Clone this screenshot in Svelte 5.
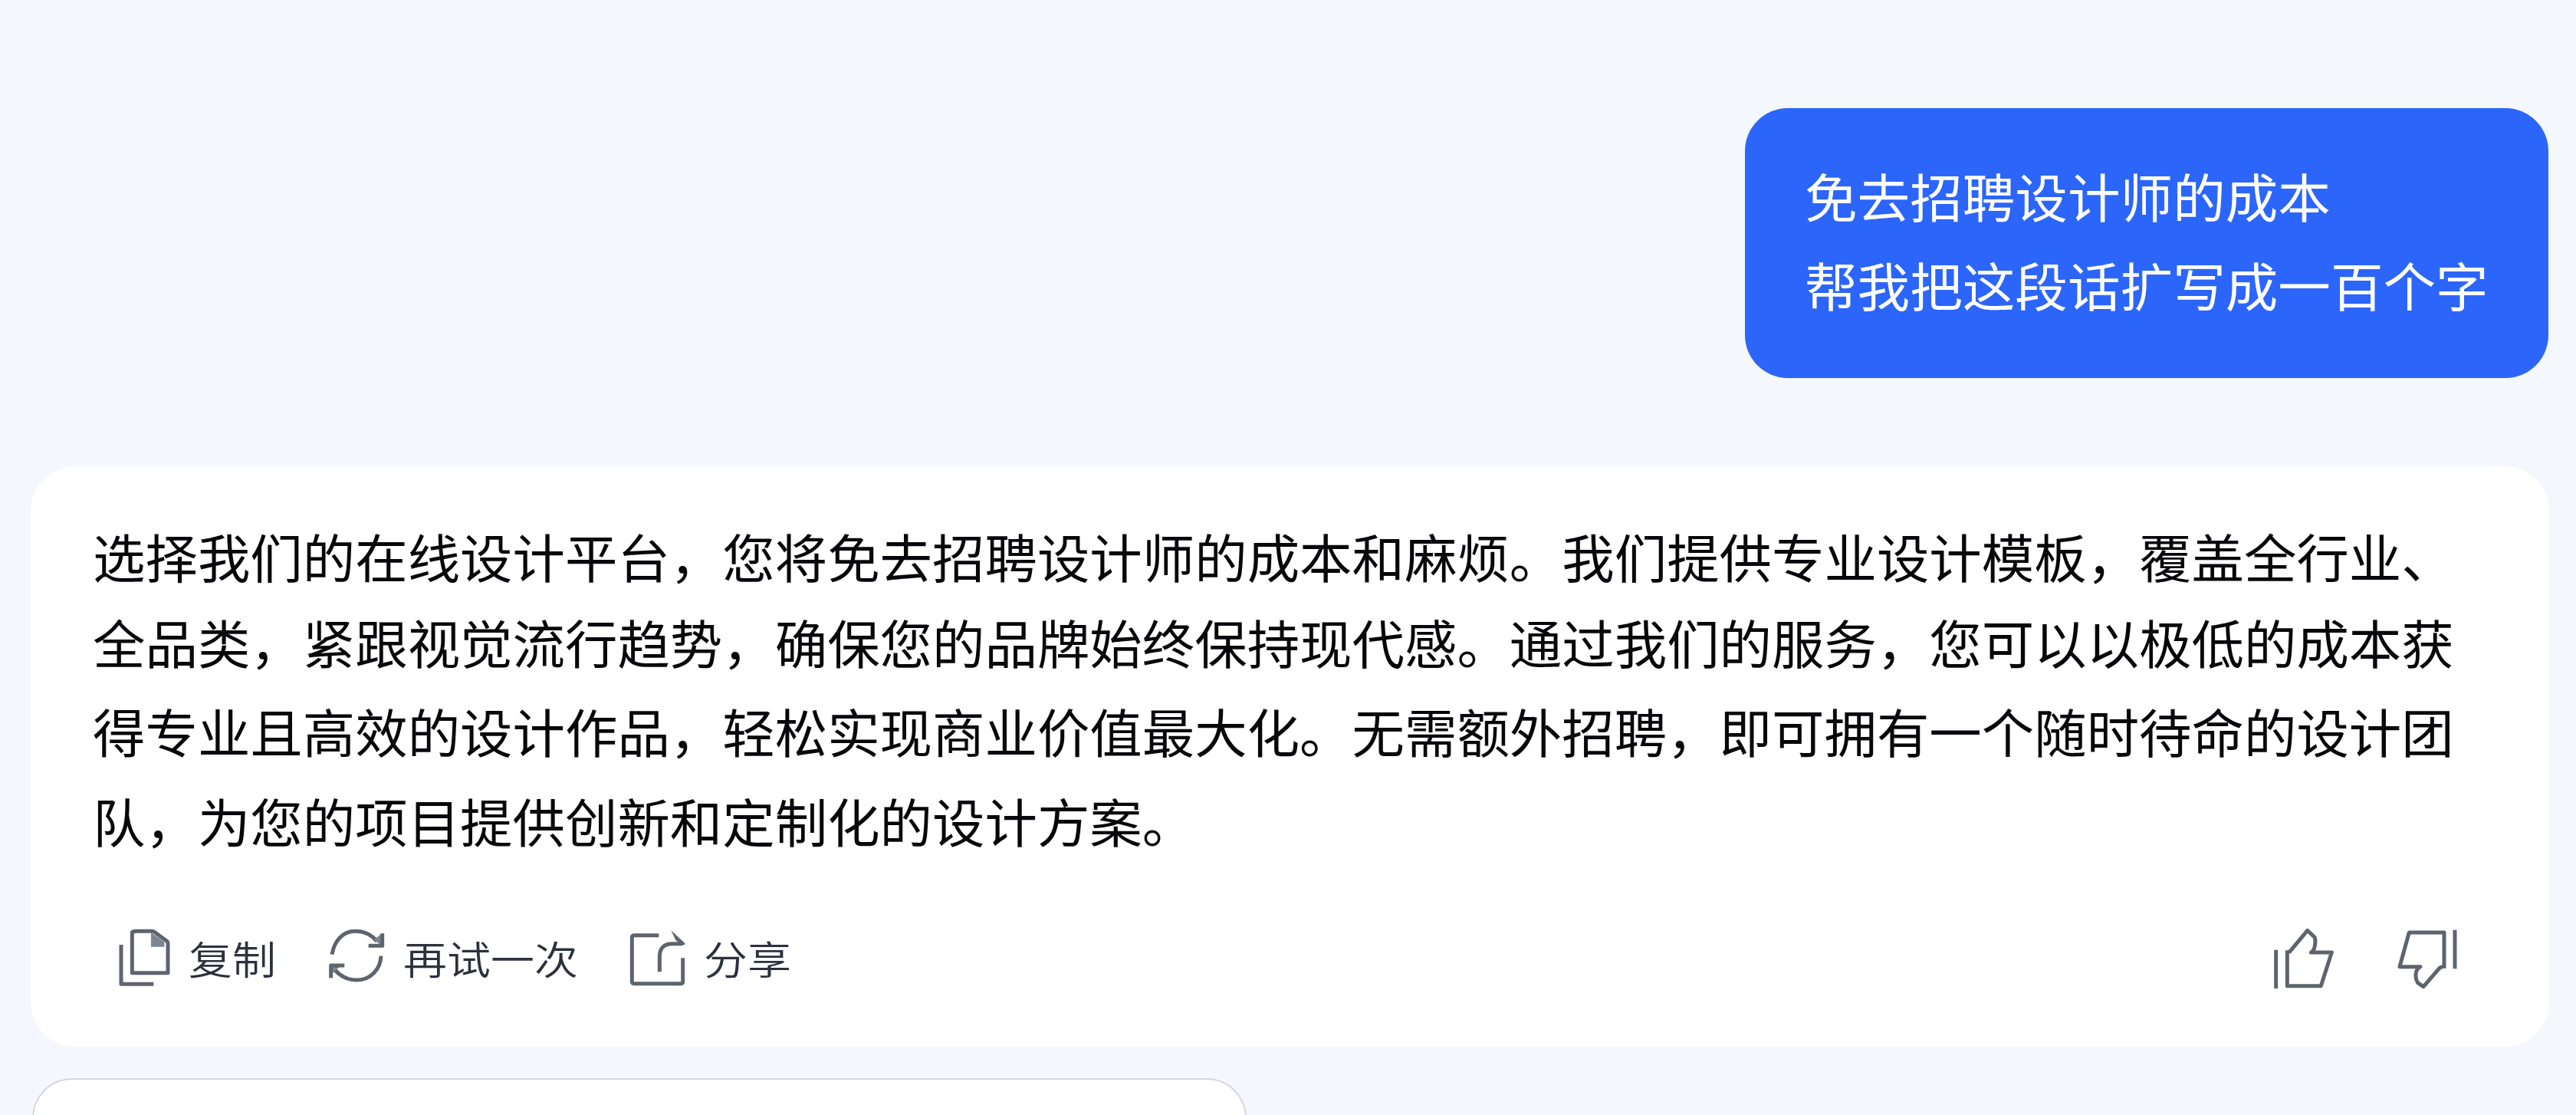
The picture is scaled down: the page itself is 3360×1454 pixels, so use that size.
<script>
  const prompt = ['免去招聘设计师的成本', '帮我把这段话扩写成一百个字'];
  const reply = [
    '选择我们的在线设计平台，您将免去招聘设计师的成本和麻烦。我们提供专业设计模板，覆盖全行业、',
    '全品类，紧跟视觉流行趋势，确保您的品牌始终保持现代感。通过我们的服务，您可以以极低的成本获',
    '得专业且高效的设计作品，轻松实现商业价值最大化。无需额外招聘，即可拥有一个随时待命的设计团',
    '队，为您的项目提供创新和定制化的设计方案。'
  ];
</script>

<main class="chat">
  <section class="bubble">
    {#each prompt as line}
      <p>{line}</p>
    {/each}
  </section>

  <section class="card">
    <div class="reply">
      {#each reply as line}
        <p>{line}</p>
      {/each}
    </div>
    <footer class="actions">
      <button class="copy" aria-label="复制">
        <svg width="68" height="78" viewBox="0 0 204 234">
          <path d="M9 66V220H136" />
          <path d="M52 18Q52 13 72 13H128Q136 13 142 18L186 50Q192 54 192 62V176H52Z" />
          <path class="fold" d="M126 18L178 54V74H126Z" />
        </svg>
        <span>复制</span>
      </button>
      <button class="retry" aria-label="再试一次">
        <svg width="74" height="78" viewBox="0 0 222 234">
          <path d="M15 104C24 52 56 13 106 13C148 13 172 30 190 52" />
          <path d="M207 110C205 160 168 204 112 204C76 204 48 190 24 162" />
          <path class="fold" d="M178 48L212 20V70Z" />
          <path d="M212 22V70H158" />
          <path class="fold" d="M10 148H50L10 184Z" />
          <path d="M11 196V147H64" />
        </svg>
        <span>再试一次</span>
      </button>
      <button class="share" aria-label="分享">
        <svg width="76" height="78" viewBox="0 0 228 234">
          <path d="M118 29H22Q13 29 13 38V210Q13 218 21 218H205Q212 218 212 210V118" />
          <path d="M121 172V112C121 76 142 62 170 62H212" />
          <path class="fold dark" d="M166 10L220 60V66H206L184 48Z" />
        </svg>
        <span>分享</span>
      </button>
      <span class="spacer"></span>
      <button class="up" aria-label="赞">
        <svg width="82" height="80" viewBox="0 0 246 240">
          <path d="M17 86V237M61 88V227H193L235 96H154C170 90 174 50 168 36L140 10L72 92L58 98" />
        </svg>
      </button>
      <button class="down" aria-label="踩">
        <svg width="82" height="80" viewBox="0 0 246 240">
          <path d="M225 8V160M183 158V18H46L9 152H90C68 162 68 196 80 215L102 230L166 156L186 148" />
        </svg>
      </button>
    </footer>
  </section>

  <section class="next"></section>
</main>

<style>
  :global(body) {
    margin: 0;
    overflow: hidden;
  }
  .chat {
    box-sizing: border-box;
    width: 3360px;
    height: 1454px;
    overflow: hidden;
    padding: 141px 35px 0 40px;
    display: flex;
    flex-direction: column;
    background: #f4f7fc;
    font-family: "Noto Sans CJK SC", sans-serif;
  }
  p {
    margin: 0;
    white-space: nowrap;
  }
  .bubble {
    box-sizing: border-box;
    flex: none;
    align-self: flex-end;
    width: 1048px;
    height: 352px;
    margin-right: 1px;
    padding: 55px 0 0 78px;
    border-radius: 56px;
    background: #2c65fa;
    color: #fff;
    font-size: 68.6px;
    line-height: 116px;
  }
  .card {
    box-sizing: border-box;
    flex: none;
    height: 757px;
    margin-top: 115px;
    padding: 60px 0 0 81px;
    border-radius: 58px;
    background: #fff;
    color: #08080c;
  }
  .reply {
    font-size: 68.45px;
    line-height: 114.5px;
    height: 542px;
  }
  .reply p:nth-child(2) {
    margin-top: -3px;
  }
  .reply p:nth-child(n + 3) {
    margin-top: 2px;
  }
  .actions {
    display: flex;
    align-items: flex-start;
    height: 82px;
  }
  button {
    display: flex;
    align-items: flex-start;
    padding: 0;
    border: 0;
    background: none;
    color: #2b313d;
    font: 350 57px/80px "Noto Sans CJK SC", sans-serif;
  }
  button span {
    white-space: nowrap;
    transform: translateY(-2px) scaleY(0.9);
  }
  svg {
    flex: none;
    fill: none;
    stroke: #5d646e;
    stroke-width: 15;
    stroke-linejoin: round;
  }
  .fold {
    fill: #7d8590;
    stroke: none;
  }
  .dark {
    fill: #5d646e;
  }
  .copy {
    margin-left: 34px;
    gap: 23px;
  }
  .retry {
    margin-left: 68px;
    gap: 24px;
  }
  .share {
    margin-left: 66px;
    gap: 22px;
  }
  .spacer {
    flex: 1;
  }
  .down {
    margin: 0 116px 0 82px;
  }
  .next {
    box-sizing: border-box;
    flex: none;
    width: 1584px;
    height: 160px;
    margin: 41px 0 0 2px;
    border: 2px solid #d3d8df;
    border-radius: 52px;
    background: #fff;
  }
</style>
